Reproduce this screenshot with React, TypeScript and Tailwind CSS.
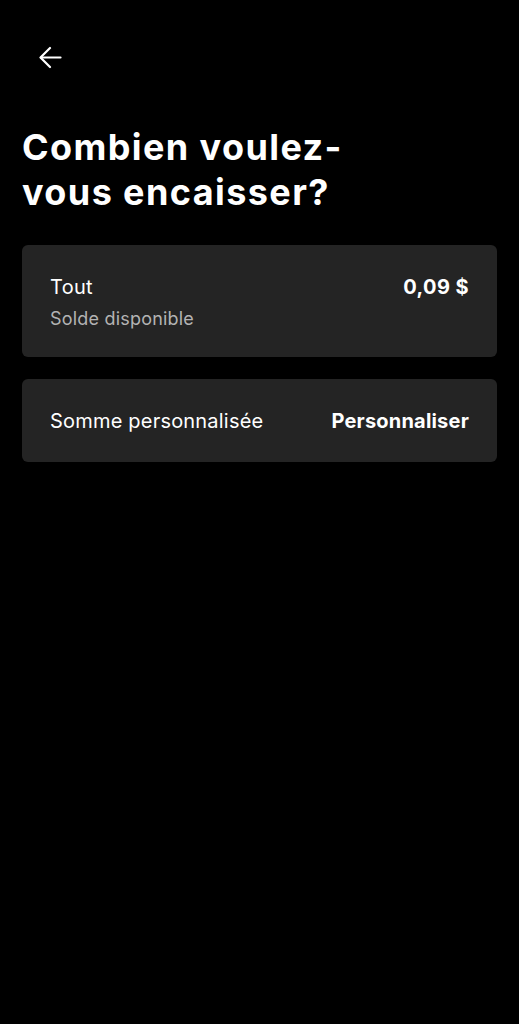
import React from "react";

export default function App() {
  return (
    <div
      className="min-h-[1024px] w-full bg-black text-white"
      style={{ fontFamily: "Inter, 'Noto Sans', sans-serif" }}
    >
      <div className="px-[22px]">
        <div className="pt-[46px] pl-[17px]">
          <svg width="23" height="23" viewBox="0 0 23 23" fill="none" stroke="white" strokeWidth="2.2" strokeLinecap="round" strokeLinejoin="round">
            <path d="M21.5 11.5H2" />
            <path d="M11 2 1.5 11.5 11 21" />
          </svg>
        </div>
        <h1 className="mt-[56px] text-[36px] leading-[45px] font-bold tracking-[1.4px]">
          Combien voulez-
          <br />
          vous encaisser?
        </h1>
        <div className="mt-[30px] flex flex-col gap-[22px]">
          <div className="h-[112px] rounded-[6px] bg-[#242424] px-[28px] pt-[30px]">
            <div className="flex items-start justify-between">
              <div className="text-[20px] leading-[24px] tracking-[0.3px]">Tout</div>
              <div className="text-[20px] leading-[24px] font-bold tracking-[0.4px]">0,09 $</div>
            </div>
            <div className="mt-[9px] text-[18px] leading-[22px] tracking-[0.2px] text-[#b3b3b3]">Solde disponible</div>
          </div>
          <div className="flex h-[83px] items-center justify-between rounded-[6px] bg-[#242424] px-[28px]">
            <div className="text-[20px] tracking-[0.2px]">Somme personnalisée</div>
            <div className="text-[20px] font-bold tracking-[0.2px]">Personnaliser</div>
          </div>
        </div>
      </div>
    </div>
  );
}
